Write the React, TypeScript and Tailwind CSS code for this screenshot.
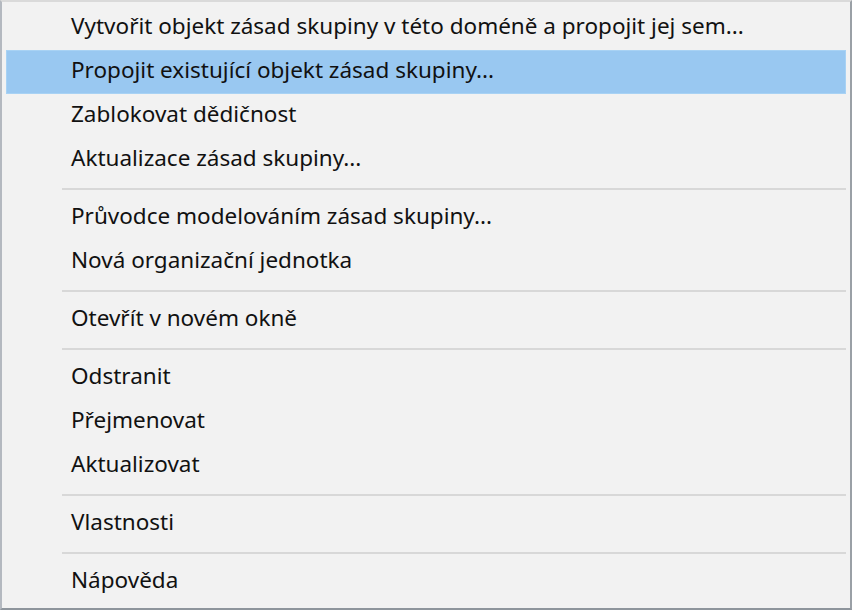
import React from "react";

type Entry = { label: string; active?: boolean } | "sep";

const entries: Entry[] = [
  { label: "Vytvořit objekt zásad skupiny v této doméně a propojit jej sem..." },
  { label: "Propojit existující objekt zásad skupiny...", active: true },
  { label: "Zablokovat dědičnost" },
  { label: "Aktualizace zásad skupiny..." },
  "sep",
  { label: "Průvodce modelováním zásad skupiny..." },
  { label: "Nová organizační jednotka" },
  "sep",
  { label: "Otevřít v novém okně" },
  "sep",
  { label: "Odstranit" },
  { label: "Přejmenovat" },
  { label: "Aktualizovat" },
  "sep",
  { label: "Vlastnosti" },
  "sep",
  { label: "Nápověda" },
];

export default function App() {
  return (
    <div className="w-[852px] h-[610px] bg-[#f2f2f2] border-t-2 border-l-2 border-t-[#dadada] border-l-[#b4b9c0] border-r-2 border-b-2 border-r-[#9aa0a6] border-b-[#8e959c] px-[4px] pt-[4px] pb-[2px] flex flex-col"
      style={{ fontFamily: '"Noto Sans", "Open Sans", sans-serif' }}>
      {entries.map((e, i) =>
        e === "sep" ? (
          <div key={i} className="h-[14px] flex items-center pl-[56px]">
            <div className="h-[2px] w-full bg-[#d8d8d8]" />
          </div>
        ) : (
          <div
            key={i}
            className={
              "h-[44px] shrink-0 flex items-center pb-[3px] text-[22.5px] text-[#111] " +
              (e.active ? "bg-[#99c8f1] border border-[#a8d2f4] pl-[64px]" : "pl-[65px]")
            }
          >
            <span className="leading-none">{e.label}</span>
          </div>
        )
      )}
    </div>
  );
}
